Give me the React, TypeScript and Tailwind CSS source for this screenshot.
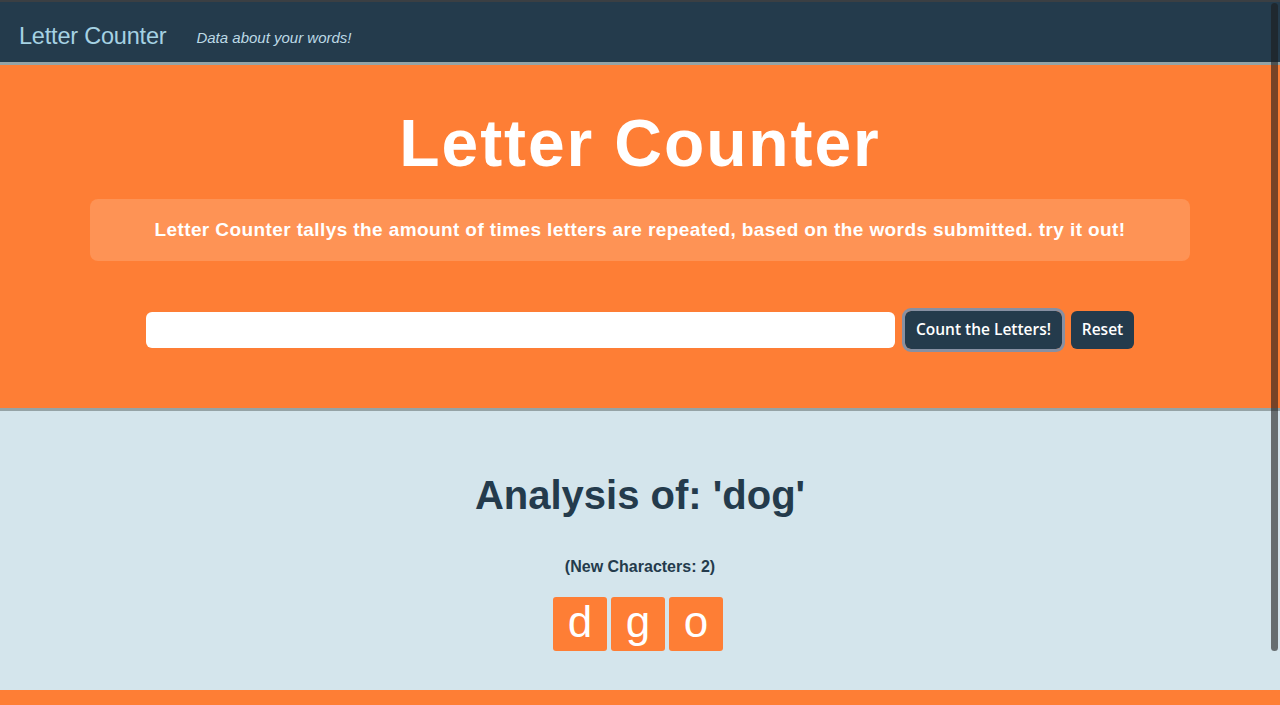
import React from "react";

export default function App() {
  const font = { fontFamily: '"Liberation Sans", Arial, sans-serif' };
  const btnFont = { fontFamily: '"Open Sans", "Noto Sans", sans-serif' };
  return (
    <div className="relative min-h-[705px] w-full bg-[#d4e5ec]" style={font}>
      <div className="h-[2px] bg-[#3b3f43]" />
      <nav className="flex h-[60px] items-center bg-[#243b4c] pl-[19px] pt-[9px]">
        <span className="text-[23.5px] leading-none text-[#a6d2e3] tracking-[-0.2px]">Letter Counter</span>
        <span className="ml-[30px] mt-[3px] text-[15px] italic text-[#bcd9e5]">Data about your words!</span>
      </nav>
      <div className="h-[3px] bg-[#95a3a6]" />
      <section className="flex h-[343px] flex-col items-center bg-[#fe7e35] pt-[38px]">
        <h1 className="text-[66px] font-bold leading-[80px] tracking-[1.9px] text-white">Letter Counter</h1>
        <div className="mt-[16px] flex h-[62px] w-[1100px] items-center justify-center rounded-[8px] bg-[#fe9355]">
          <p className="text-[19px] font-bold tracking-[0.4px] text-white">
            Letter Counter tallys the amount of times letters are repeated, based on the words submitted. try it out!
          </p>
        </div>
        <div className="mt-[50px] flex items-center">
          <div className="h-[36px] w-[749px] rounded-[6px] bg-white" />
          <button className="ml-[10px] h-[38px] w-[157px] rounded-[6px] bg-[#243b4c] text-[15.5px] font-semibold text-white outline outline-[3px] outline-[#8790a3]" style={btnFont}>
            Count the Letters!
          </button>
          <button className="ml-[9px] h-[38px] w-[63px] rounded-[6px] bg-[#243b4c] text-[15.5px] font-semibold text-white" style={btnFont}>
            Reset
          </button>
        </div>
      </section>
      <div className="h-[3px] bg-[#95a3a6]" />
      <section className="flex h-[279px] flex-col items-center bg-[#d4e5ec] pt-[60px]">
        <h2 className="text-[40px] font-bold leading-[48px] text-[#243b4c]">Analysis of: 'dog'</h2>
        <p className="mt-[38px] text-[16px] font-bold leading-[20px] text-[#243b4c]">(New Characters: 2)</p>
        <div className="mt-[20px] flex gap-[4px] pr-[4px]">
          {["d", "g", "o"].map((c) => (
            <div key={c} className="flex h-[54px] w-[54px] items-center justify-center rounded-[3px] bg-[#fe7e35] pb-[4px] text-[44px] text-white">
              {c}
            </div>
          ))}
        </div>
      </section>
      <div className="h-[15px] bg-[#fe7e35]" />
      <div className="absolute right-[2px] top-[3px] h-[648px] w-[7px] rounded-full bg-[#1c1c1c]/60" />
    </div>
  );
}
